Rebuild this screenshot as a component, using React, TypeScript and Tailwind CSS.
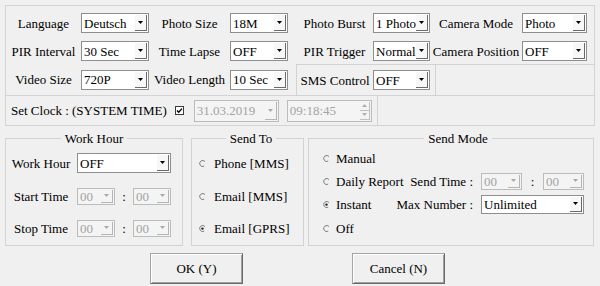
import React from 'react';

type ComboProps = { value: string; disabled?: boolean; className: string };

const Arrow = ({ up = false, color = '#000' }: { up?: boolean; color?: string }) => (
  <svg width="5" height="3" viewBox="0 0 5 3">
    <path d={up ? 'M0 3h5L2.5 0z' : 'M0 0h5L2.5 3z'} fill={color} />
  </svg>
);

const Combo = ({ value, disabled, className }: ComboProps) => (
  <div
    className={`flex items-stretch border ${
      disabled ? 'border-[#bcbcbc] bg-[#f4f4f4] text-[#a3a3a3]' : 'border-[#8e8e8e] bg-white text-black'
    } ${className}`}
  >
    <span className="flex-1 flex items-center pl-[2px] whitespace-nowrap overflow-hidden">{value}</span>
    <span
      className={`w-[12px] my-[1px] mr-[1px] flex items-center justify-center border-r border-b ${
        disabled ? 'border-[#b5b5b5] bg-[#f4f4f4]' : 'border-[#6a6a6a] bg-[#f7f7f7]'
      }`}
    >
      <Arrow color={disabled ? '#a8a8a8' : '#000'} />
    </span>
  </div>
);

const Radio = ({ checked = false }: { checked?: boolean }) => (
  <svg width="7" height="7" viewBox="0 0 7 7" className="shrink-0">
    <path d="M6 1.6A3 3 0 1 0 5.2 6.1" fill="none" stroke="#808080" strokeWidth="1" />
    {checked && <circle cx="3.5" cy="3.6" r="1.2" fill="#222" />}
  </svg>
);

const Checkbox = () => (
  <svg width="9" height="9" viewBox="0 0 9 9">
    <rect x="0.5" y="0.5" width="8" height="8" fill="#fff" stroke="#3a3a3a" />
    <path d="M2 4.4l1.7 1.8L7 2.6" fill="none" stroke="#000" strokeWidth="1.4" />
  </svg>
);

const Button = ({ label }: { label: string }) => (
  <button className="w-[93px] h-[31px] bg-[#f0f0f0] border border-[#a5a5a5] border-r-[#6a6a6a] border-b-[#6a6a6a] shadow-[inset_1px_1px_0_#ffffff,inset_-1px_-1px_0_#a0a0a0] flex items-center justify-center">
    {label}
  </button>
);

export default function App() {
  return (
    <div className="w-[600px] h-[286px] bg-[#f0f0f0] pt-[5px] pl-[5px] text-[13px] text-black [font-family:Liberation_Serif,serif] leading-[15px] overflow-hidden">
      {/* Top settings panel */}
      <div className="w-[590px] h-[121px] border border-[#d3d3d3] flex flex-col">
        <div className="mt-[7px] h-[20px] flex items-center">
          <span className="w-[75px] text-center">Language</span>
          <Combo value="Deutsch" className="w-[68px] h-[20px]" />
          <span className="w-[81px] text-center">Photo Size</span>
          <Combo value="18M" className="w-[58px] h-[20px]" />
          <span className="w-[85px] pl-[8px] text-center">Photo Burst</span>
          <Combo value="1 Photo" className="w-[57px] h-[20px]" />
          <span className="w-[92px] text-center">Camera Mode</span>
          <Combo value="Photo" className="w-[65px] h-[20px]" />
        </div>
        <div className="mt-[8px] h-[20px] flex items-center">
          <span className="w-[75px] text-center">PIR Interval</span>
          <Combo value="30 Sec" className="w-[68px] h-[20px]" />
          <span className="w-[81px] text-center">Time Lapse</span>
          <Combo value="OFF" className="w-[58px] h-[20px]" />
          <span className="w-[85px] pl-[8px] text-center">PIR Trigger</span>
          <Combo value="Normal" className="w-[57px] h-[20px]" />
          <span className="w-[92px] text-center">Camera Position</span>
          <Combo value="OFF" className="w-[65px] h-[20px]" />
        </div>
        <div className="mt-[3px] h-[31px] flex items-center">
          <span className="w-[75px] text-center">Video Size</span>
          <Combo value="720P" className="w-[68px] h-[20px]" />
          <span className="w-[81px] text-center">Video Length</span>
          <Combo value="10 Sec" className="w-[58px] h-[20px]" />
          <span className="w-[8px]" />
          <div className="w-[139px] h-full border-t border-l border-[#d3d3d3] flex items-center">
            <span className="w-[76px] text-center">SMS Control</span>
            <Combo value="OFF" className="w-[57px] h-[20px]" />
          </div>
          <div className="flex-1 h-full border-t border-l border-[#d3d3d3]" />
        </div>
        <div className="h-[30px] border-t border-[#d3d3d3] flex items-center">
          <span className="pl-[5px]">Set Clock : (SYSTEM TIME)</span>
          <span className="ml-[8px] flex items-center">
            <Checkbox />
          </span>
          <Combo value="31.03.2019" disabled className="ml-[10px] w-[85px] h-[22px]" />
          <div className="ml-[8px] w-[85px] h-[22px] flex items-stretch border border-[#bcbcbc] bg-[#f4f4f4] text-[#a3a3a3]">
            <span className="flex-1 flex items-center pl-[2px]">09:18:45</span>
            <span className="w-[10px] my-[1px] mr-[1px] flex flex-col">
              <span className="flex-1 flex items-center justify-center border-r border-b border-[#c0c0c0]">
                <Arrow up color="#b0b0b0" />
              </span>
              <span className="flex-1 flex items-center justify-center border-r border-b border-[#c0c0c0]">
                <Arrow color="#b0b0b0" />
              </span>
            </span>
          </div>
          <div className="ml-[5px] h-full border-l border-[#d3d3d3]" />
        </div>
      </div>

      {/* Group boxes */}
      <div className="mt-[5px] flex items-start">
        <fieldset className="w-[178px] h-[115px] border border-[#d3d3d3] px-[1px]">
          <legend className="mx-auto px-[4px] leading-[15px]">Work Hour</legend>
          <div className="mt-[7px] h-[20px] flex items-center">
            <span className="w-[68px] text-center">Work Hour</span>
            <Combo value="OFF" className="ml-[2px] w-[94px] h-[20px]" />
          </div>
          <div className="mt-[13px] h-[20px] flex items-center">
            <span className="w-[68px] text-center">Start Time</span>
            <Combo value="00" disabled className="ml-[2px] w-[38px] h-[17px]" />
            <span className="w-[18px] text-center">:</span>
            <Combo value="00" disabled className="w-[38px] h-[17px]" />
          </div>
          <div className="mt-[12px] h-[20px] flex items-center">
            <span className="w-[68px] text-center">Stop Time</span>
            <Combo value="00" disabled className="ml-[2px] w-[38px] h-[17px]" />
            <span className="w-[18px] text-center">:</span>
            <Combo value="00" disabled className="w-[38px] h-[17px]" />
          </div>
        </fieldset>

        <fieldset className="ml-[8px] w-[113px] h-[115px] border border-[#d3d3d3] pl-[7px]">
          <legend className="mx-auto px-[4px] leading-[15px]">Send To</legend>
          <div className="mt-[7px] h-[20px] flex items-center gap-[8px]">
            <Radio />
            <span>Phone [MMS]</span>
          </div>
          <div className="mt-[13px] h-[20px] flex items-center gap-[8px]">
            <Radio />
            <span>Email [MMS]</span>
          </div>
          <div className="mt-[12px] h-[20px] flex items-center gap-[8px]">
            <Radio checked />
            <span>Email [GPRS]</span>
          </div>
        </fieldset>

        <fieldset className="ml-[4px] w-[286px] h-[115px] border border-[#d3d3d3] pl-[14px]">
          <legend className="mx-auto px-[4px] leading-[15px]">Send Mode</legend>
          <div className="mt-[2px] h-[20px] flex items-center">
            <Radio />
            <span className="ml-[6px]">Manual</span>
          </div>
          <div className="mt-[3px] h-[20px] flex items-center">
            <Radio />
            <span className="ml-[6px] w-[72px] whitespace-nowrap">Daily Report</span>
            <span className="w-[65px] text-right whitespace-nowrap">Send Time :</span>
            <Combo value="00" disabled className="ml-[8px] w-[41px] h-[17px]" />
            <span className="w-[21px] text-center">:</span>
            <Combo value="00" disabled className="w-[41px] h-[17px]" />
          </div>
          <div className="mt-[3px] h-[20px] flex items-center">
            <Radio checked />
            <span className="ml-[6px] w-[60px]">Instant</span>
            <span className="w-[77px] text-right whitespace-nowrap">Max Number :</span>
            <Combo value="Unlimited" className="ml-[8px] w-[103px] h-[19px]" />
          </div>
          <div className="mt-[4px] h-[20px] flex items-center">
            <Radio />
            <span className="ml-[6px]">Off</span>
          </div>
        </fieldset>
      </div>

      {/* Buttons */}
      <div className="mt-[7px] pl-[145px] flex gap-[109px]">
        <Button label="OK (Y)" />
        <Button label="Cancel (N)" />
      </div>
    </div>
  );
}
